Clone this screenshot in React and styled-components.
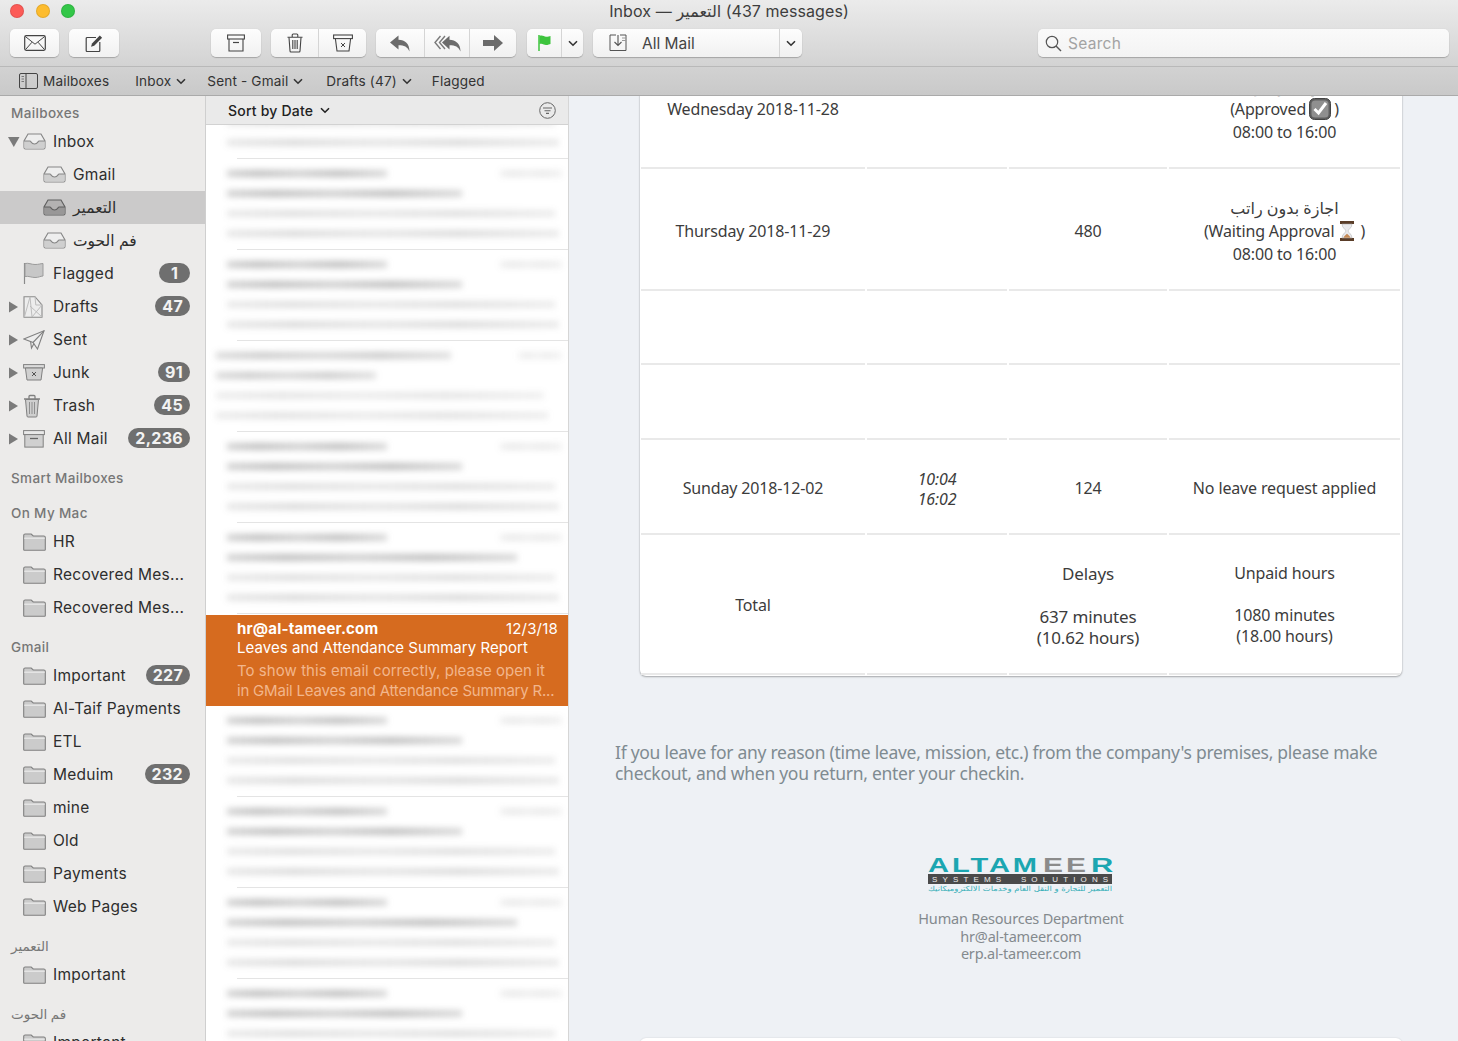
import React from "react"
import styled, { createGlobalStyle } from "styled-components"

const GlobalStyle = createGlobalStyle`
  html, body {
    margin: 0;
    height: 100%;
    overflow: hidden;
    font-family: Inter, "DejaVu Sans", sans-serif;
    -webkit-font-smoothing: antialiased;
  }
  #root { height: 100%; }
`

const Window = styled.div`
  width: 1458px;
  height: 1041px;
  display: flex;
  flex-direction: column;
  overflow: hidden;
  background: #ecebea;
`

const Chrome = styled.header`
  height: 66px;
  flex: none;
  background: linear-gradient(#ebebeb, #d3d3d3);
  border-bottom: 1px solid #b9b9b9;
`

const TitleBar = styled.div`
  height: 22px;
  display: grid;
  grid-template-columns: 1fr auto 1fr;
  align-items: center;
`

const Lights = styled.div`
  display: flex;
  gap: 11.5px;
  padding-left: 10px;
`

const Light = styled.span`
  width: 14px;
  height: 14px;
  border-radius: 50%;
  background: ${(p) => p.$color};
  box-shadow: inset 0 0 0 1px rgba(0, 0, 0, 0.1);
`

const Title = styled.div`
  font-size: 16px;
  color: #3d3d3d;
  letter-spacing: 0.1px;
`

const Toolbar = styled.div`
  display: flex;
  align-items: flex-start;
  gap: 10px;
  padding: 7px 9px 0 10px;
`

const Group = styled.div`
  display: flex;
  height: 28px;
  margin-left: ${(p) => p.$offset || 0}px;
  border-radius: 5px;
  background: linear-gradient(#fdfdfd, #f1f1f1);
  box-shadow: 0 1px 1px rgba(0, 0, 0, 0.22), 0 0 1px rgba(0, 0, 0, 0.12);
`

const Btn = styled.div`
  width: ${(p) => p.$w}px;
  box-sizing: border-box;
  display: flex;
  align-items: center;
  justify-content: center;
  & + & {
    border-left: 1px solid #d5d5d5;
  }
`

const MailBtn = styled(Btn)`
  justify-content: flex-start;
  padding-left: 16px;
  gap: 13px;
  font-size: 15.5px;
  color: #444;
`

const SearchBox = styled.div`
  margin-left: auto;
  width: 411px;
  height: 28px;
  display: flex;
  align-items: center;
  gap: 6px;
  padding-left: 7px;
  box-sizing: border-box;
  border-radius: 5px;
  background: linear-gradient(#fafafa, #f3f3f3);
  box-shadow: 0 1px 1px rgba(0, 0, 0, 0.22), 0 0 1px rgba(0, 0, 0, 0.12);
  font-size: 15.5px;
  letter-spacing: 0.3px;
  color: #a3a3a3;
`

const FavBar = styled.nav`
  height: 28px;
  flex: none;
  display: flex;
  align-items: center;
  padding-left: 19px;
  background: linear-gradient(#d2d2d2, #c9c9c9);
  border-bottom: 1px solid #aaa;
  font-size: 13.6px;
  letter-spacing: 0.15px;
  color: #333;
`

const Fav = styled.div`
  display: flex;
  align-items: center;
  gap: 5px;
  margin-right: ${(p) => p.$after}px;
`

const Body = styled.main`
  flex: 1;
  min-height: 0;
  display: flex;
`

const Sidebar = styled.aside`
  width: 205px;
  flex: none;
  overflow: hidden;
  background: #ecebea;
  border-right: 1px solid #cfcfcf;
`

const Label = styled.div`
  height: ${(p) => (p.$first ? 29.4 : 35)}px;
  box-sizing: border-box;
  display: flex;
  align-items: flex-end;
  padding: 0 0 4px 11px;
  font-size: 13.5px;
  font-weight: 500;
  letter-spacing: 0.35px;
  color: #777;
`

const Row = styled.div`
  height: 33px;
  display: flex;
  align-items: center;
  padding-right: 15px;
  font-size: 15.5px;
  letter-spacing: 0.25px;
  color: #2e2e2e;
  background: ${(p) => (p.$active ? "#cbcaca" : "transparent")};
`

const Arrow = styled.span`
  width: 23px;
  flex: none;
  display: flex;
  justify-content: flex-start;
  padding-left: 8px;
  box-sizing: border-box;
`

const IconSlot = styled.span`
  width: 30px;
  flex: none;
  display: flex;
  margin-left: ${(p) => (p.$child ? 20 : 0)}px;
`

const RowText = styled.span`
  flex: 1;
  white-space: nowrap;
`

const Badge = styled.span`
  height: 20px;
  min-width: 17px;
  padding: 0 7px;
  margin-bottom: 2px;
  display: flex;
  align-items: center;
  justify-content: center;
  border-radius: 10px;
  background: #6f6f6f;
  color: #f3f3f3;
  font-size: 16px;
  font-weight: 700;
  letter-spacing: 0.3px;
`

const ListPane = styled.section`
  width: 362px;
  flex: none;
  display: flex;
  flex-direction: column;
  background: #fff;
  border-right: 1px solid #d6d6d6;
`

const ListHeader = styled.div`
  height: 28px;
  flex: none;
  display: flex;
  align-items: center;
  gap: 7px;
  padding: 0 12px 0 22px;
  background: #eaeaea;
  border-bottom: 1px solid #d2d2d2;
  font-size: 14px;
  font-weight: 500;
  letter-spacing: 0.2px;
  color: #222;
`

const FilterSlot = styled.span`
  margin-left: auto;
  display: flex;
`

const ListScroll = styled.div`
  flex: 1;
  min-height: 0;
  overflow: hidden;
`

const ListInner = styled.div`
  margin-top: -57px;
`

const Blurred = styled.div`
  height: 91px;
  box-sizing: border-box;
  position: relative;
  overflow: hidden;
  &::after {
    content: "";
    position: absolute;
    left: 31px;
    right: 0;
    bottom: 0;
    height: 1px;
    background: #e4e4e4;
  }
`

const BlurStack = styled.div`
  display: flex;
  flex-direction: column;
  padding: 11px 6px 0 ${(p) => (p.$shift ? 10 : 21)}px;
  gap: 13px;
  filter: blur(3px);
`

const BlurLine = styled.div`
  display: flex;
  justify-content: space-between;
  height: 7px;
`

const Smear = styled.i`
  display: block;
  height: 100%;
  width: ${(p) => p.$w}px;
  background: linear-gradient(
    90deg,
    rgba(70, 70, 70, ${(p) => p.$a * 0.7}) 0,
    rgba(70, 70, 70, ${(p) => p.$a}) 20%,
    rgba(70, 70, 70, ${(p) => p.$a * 0.75}) 45%,
    rgba(70, 70, 70, ${(p) => p.$a}) 70%,
    rgba(70, 70, 70, ${(p) => p.$a * 0.6}) 100%
  );
`

const Selected = styled.div`
  height: 91px;
  margin-top: 1px;
  box-sizing: border-box;
  padding: 4px 10px 0 31px;
  background: #d66b1f;
  color: #fff;
  font-size: 15px;
`

const SelectedTop = styled.div`
  display: flex;
  justify-content: space-between;
  line-height: 19px;
  letter-spacing: 0.2px;
`

const Sender = styled.span`
  font-weight: 700;
`

const Subject = styled.div`
  line-height: 19px;
  margin-bottom: 4px;
  letter-spacing: 0.05px;
`

const Preview = styled.div`
  line-height: 20px;
  color: #f2b68c;
  white-space: nowrap;
  letter-spacing: ${(p) => p.$spacing}px;
`

const MailPane = styled.article`
  flex: 1;
  min-width: 0;
  overflow: hidden;
  display: flex;
  flex-direction: column;
  background: #eef1f5;
  font-family: "Noto Sans", "DejaVu Sans", sans-serif;
`

const TableCard = styled.div`
  flex: none;
  width: 762px;
  box-sizing: border-box;
  margin: -49px 0 0 71px;
  padding: 0 2px 1px 1px;
  background: #fff;
  border-radius: 6px;
  box-shadow: 0 1px 2px rgba(0, 0, 0, 0.28), 0 0 2px rgba(0, 0, 0, 0.14);
  color: #3c3c3c;
  font-size: 16px;
  letter-spacing: -0.15px;
`

const TableRow = styled.div`
  display: grid;
  grid-template-columns: 224px 140px 158px 231px;
  column-gap: 2px;
  height: ${(p) => p.$h}px;
`

const Cell = styled.div`
  display: flex;
  flex-direction: column;
  align-items: center;
  justify-content: center;
  text-align: center;
  padding-top: ${(p) => (p.$total ? 2 : 4)}px;
  box-sizing: border-box;
  border-bottom: 2px solid #e9e9e9;
  line-height: ${(p) => (p.$italic ? 20 : 23)}px;
  font-style: ${(p) => (p.$italic ? "italic" : "normal")};
`

const Inline = styled.span`
  display: inline-flex;
  align-items: center;
  gap: ${(p) => p.$gap}px;
`

const TotalLines = styled.div`
  line-height: 21px;
  font-size: ${(p) => p.$size}px;
`

const Spaced = styled.div`
  margin-bottom: ${(p) => p.$gap}px;
`

const Notice = styled.p`
  margin: 66px 0 0 46px;
  width: 790px;
  font-size: 17.5px;
  letter-spacing: -0.28px;
  line-height: 21px;
  color: #7f8b91;
`

const Signature = styled.div`
  margin-top: 70px;
  width: 904px;
  display: flex;
  flex-direction: column;
  align-items: center;
  font-size: 14.5px;
  letter-spacing: -0.2px;
  line-height: 17.5px;
  color: #848a8e;
`

const LogoWrap = styled.div`
  display: flex;
  margin-bottom: 17px;
`

const NextCard = styled.div`
  flex: none;
  width: 762px;
  height: 60px;
  margin: 75px 0 0 71px;
  background: #fff;
  border-radius: 6px 6px 0 0;
  box-shadow: 0 0 2px rgba(0, 0, 0, 0.14);
`

/* icons */
const Svg = ({ w, h, children, ...rest }) => (
  <svg width={w} height={h} viewBox={`0 0 ${w} ${h}`} fill="none" {...rest}>
    {children}
  </svg>
)

const Chevron = ({ color = "#333" }) => (
  <Svg w={10} h={7}>
    <path d="M1 1.2 5 5.2 9 1.2" stroke={color} strokeWidth="1.6" />
  </Svg>
)

const Triangle = ({ open }) => (
  <Svg w={12} h={12}>
    {open ? <path d="M0 1h11.5L5.8 11z" fill="#7b7b7b" /> : <path d="M1 .5 10 6l-9 5.5z" fill="#7b7b7b" />}
  </Svg>
)

const Envelope = () => (
  <Svg w={22} h={16}>
    <rect x=".7" y=".7" width="20.6" height="14.6" rx="1.5" stroke="#444" strokeWidth="1.2" />
    <path d="M1.2 1.4 11 9.2l9.8-7.8M1.5 14.6 8 7.2M20.5 14.6 14 7.2" stroke="#444" />
  </Svg>
)

const Compose = () => (
  <Svg w={18} h={18}>
    <path d="M11 3.5H2.2a1 1 0 0 0-1 1v12a1 1 0 0 0 1 1h11.6a1 1 0 0 0 1-1V8" stroke="#444" strokeWidth="1.2" />
    <path d="M6 12.8 7 9.6 14.8 1.6l2.3 2.2-7.9 8z" fill="#444" />
  </Svg>
)

const ArchiveBox = () => (
  <Svg w={18} h={18}>
    <rect x=".6" y="1" width="16.8" height="4" stroke="#444" strokeWidth="1.1" />
    <path d="M2 5v12h14V5" stroke="#444" strokeWidth="1.1" />
    <path d="M6 8.5h6" stroke="#444" strokeWidth="1.2" />
  </Svg>
)

const TrashCan = () => (
  <Svg w={16} h={20}>
    <path d="M.5 4.2h15M5.2 4V2a1 1 0 0 1 1-1h3.6a1 1 0 0 1 1 1v2" stroke="#444" strokeWidth="1.1" />
    <path d="M2 4.5 3 18a1 1 0 0 0 1 1h8a1 1 0 0 0 1-1l1-13.5" stroke="#444" strokeWidth="1.1" />
    <path d="M5.8 7v9M8 7v9M10.2 7v9" stroke="#444" strokeWidth="1.1" />
  </Svg>
)

const JunkBin = () => (
  <Svg w={20} h={18}>
    <rect x=".6" y="1" width="18.8" height="3.6" stroke="#444" strokeWidth="1.1" />
    <path d="M2.4 4.8 4 17h12l1.6-12.2" stroke="#444" strokeWidth="1.1" />
    <path d="M8 9l4 4M12 9l-4 4" stroke="#444" />
  </Svg>
)

const Reply = () => (
  <Svg w={20} h={17}>
    <path d="M0 7.5 8.5.5v4.3c6.5.2 11 3.7 11 11.7-2-4.8-5.3-6.3-11-6.3v4.4z" fill="#6b6b6b" />
  </Svg>
)

const ReplyAll = () => (
  <Svg w={27} h={17}>
    <path d="M6.5 1 1 7.5 6.5 14M11 1 5.5 7.5 11 14" stroke="#7a7a7a" strokeWidth="1.4" />
    <path d="M8 7.5 15.5.7v4.1c6 .2 11 3.7 11 11.7-2-4.8-5.3-6.3-11-6.3v4.4z" fill="#6b6b6b" />
  </Svg>
)

const Forward = () => (
  <Svg w={20} h={16}>
    <path d="M0 5h11V0l9 8-9 8v-5H0z" fill="#6b6b6b" />
  </Svg>
)

const GreenFlag = () => (
  <Svg w={13} h={16}>
    <path d="M1 0v16" stroke="#3dc43d" strokeWidth="1.5" />
    <path d="M1.5 1c3-1.2 4.5.8 6.5.8 2 0 3.5-.6 4.5-.8v8c-1 .3-2.5 1-4.5 1S4.5 8 1.5 9z" fill="#3dc43d" />
  </Svg>
)

const MoveIcon = () => (
  <Svg w={20} h={18}>
    <path d="M7 1H1v15.5h16V1h-6" stroke="#555" />
    <path d="M9 1v10M5.5 8 9 11.5 12.5 8" stroke="#555" strokeWidth="1.1" />
    <path d="M13 4h4M13 6.5h4" stroke="#999" />
  </Svg>
)

const Magnifier = () => (
  <Svg w={17} h={17}>
    <circle cx="7" cy="7" r="5.7" stroke="#555" strokeWidth="1.2" />
    <path d="M11 11l5 5" stroke="#555" strokeWidth="1.4" />
  </Svg>
)

const SidebarToggle = () => (
  <Svg w={19} h={16}>
    <rect x=".5" y=".5" width="18" height="15" rx="1.5" stroke="#444" />
    <path d="M7 .5v15" stroke="#444" />
    <path d="M2.5 3.5h2.5M2.5 6h2.5M2.5 8.5h2.5" stroke="#777" />
  </Svg>
)

const FilterIcon = () => (
  <Svg w={17} h={17}>
    <circle cx="8.5" cy="8.5" r="7.8" stroke="#666" />
    <path d="M4 6h9M5.5 8.7h6M7 11.4h3" stroke="#666" strokeWidth="1.1" />
  </Svg>
)

const TrayIcon = ({ dark }) => (
  <Svg w={23} h={17}>
    <path
      d="M5 1h13l4 7v6.5a1.5 1.5 0 0 1-1.5 1.5h-18A1.5 1.5 0 0 1 1 14.5V8z"
      fill={dark ? "#b3b2b2" : "#eeeeee"}
      stroke={dark ? "#5e5e5e" : "#858585"}
      strokeWidth="1.1"
    />
    <path
      d="M1.3 8H7c1 0 1.2 3 4.5 3S15 8 16 8h5.7v6.5a1 1 0 0 1-1 1H2.3a1 1 0 0 1-1-1z"
      fill={dark ? "#989797" : "#cfcfcf"}
    />
    <path d="M1 8h6c1 0 1.2 3 4.5 3S15 8 16 8h6" stroke={dark ? "#5e5e5e" : "#858585"} strokeWidth="1.1" />
  </Svg>
)

const FlagIcon = () => (
  <Svg w={22} h={23}>
    <path d="M1.5 1v21" stroke="#8a8a8a" strokeWidth="1.2" />
    <path d="M2 1.5c4-.8 6 1 10 1s5-.8 8-1V14c-3 .2-4 1.5-8 1.5s-6-1.7-10-1z" fill="#c7c7c7" stroke="#9b9b9b" />
  </Svg>
)

const DraftIcon = () => (
  <Svg w={20} h={22}>
    <path d="M1 .7h11l7 8.3v12.3H1z" fill="#ededed" stroke="#8a8a8a" strokeWidth="1.1" />
    <path d="M7 .9 9 21M7 .9 1.4 21M9 21 19 9M12 .9 12.8 9H19M7 10l12 11" stroke="#bdbdbd" />
  </Svg>
)

const SentIcon = () => (
  <Svg w={22} h={20}>
    <path d="M.8 9 21 .8 14.5 19 10 12.5z" fill="#ededed" stroke="#808080" strokeWidth="1.1" />
    <path d="M10 12.5 21 .8M7.5 11l1 7 2.5-4.5" stroke="#808080" strokeWidth="1.1" />
  </Svg>
)

const JunkIcon = () => (
  <Svg w={22} h={17}>
    <rect x=".6" y=".6" width="20.8" height="3.4" fill="#dcdcdc" stroke="#808080" />
    <path d="M2.4 4 4 16h14l1.6-12z" fill="#d0d0d0" stroke="#808080" />
    <path d="M9 8l4 4M13 8l-4 4" stroke="#555" />
  </Svg>
)

const TrashIcon = () => (
  <Svg w={18} h={24}>
    <path d="M1 5h16M6 4.5V2.5a1 1 0 0 1 1-1h4a1 1 0 0 1 1 1v2" stroke="#808080" strokeWidth="1.3" />
    <path d="M2.5 5.5 4 22a1 1 0 0 0 1 1h8a1 1 0 0 0 1-1l1.5-16.5z" fill="#cfcfcf" stroke="#808080" />
    <path d="M6.5 8v12M9 8v12M11.5 8v12" stroke="#8f8f8f" />
  </Svg>
)

const AllMailIcon = () => (
  <Svg w={22} h={18}>
    <rect x=".6" y=".6" width="20.8" height="4" fill="#e8e8e8" stroke="#808080" />
    <rect x="1.8" y="4.6" width="18.4" height="12.5" fill="#d0d0d0" stroke="#808080" />
    <path d="M7 8.5h8" stroke="#666" strokeWidth="1.3" />
  </Svg>
)

const FolderIcon = () => (
  <Svg w={23} h={18}>
    <path
      d="M.7 2.5A1.5 1.5 0 0 1 2.2 1h6l2 2h10.6a1.5 1.5 0 0 1 1.5 1.5v12a.8.8 0 0 1-.8.8H1.5a.8.8 0 0 1-.8-.8z"
      fill="#cbcbcb"
      stroke="#808080"
      strokeWidth="1.1"
    />
    <path d="M1.2 5.2h20.6" stroke="#f0f0f0" />
  </Svg>
)

const CheckBadge = () => (
  <Svg w={22} h={22}>
    <rect x=".5" y=".5" width="21" height="21" rx="5" fill="#5f5f5f" stroke="#444" />
    <rect x="2.5" y="2.5" width="17" height="17" rx="3.5" fill="#8f8f8f" />
    <path d="M5.5 11 9.5 15 17 5" stroke="#fff" strokeWidth="3" />
  </Svg>
)

const Hourglass = () => (
  <Svg w={16} h={20}>
    <rect x="1" y="0" width="14" height="3" fill="#5a3d28" />
    <rect x="1" y="17" width="14" height="3" fill="#5a3d28" />
    <path d="M3 3h10c0 4-3.5 5-4 7 .5 2 4 3 4 7H3c0-4 3.5-5 4-7-.5-2-4-3-4-7z" fill="#e9e9ec" stroke="#aaa" strokeWidth=".5" />
    <path d="M4.5 16.8c.5-2 2.5-3 3.5-4 1 1 3 2 3.5 4z" fill="#c58a56" />
  </Svg>
)

const Logo = () => (
  <Svg w={186} h={39}>
    <text x="0" y="18" fill="#1ca6b1" fontFamily="Liberation Sans" fontWeight="700" fontSize="20" letterSpacing="2" textLength="112" lengthAdjust="spacingAndGlyphs">
      ALTAM
    </text>
    <text x="115" y="18" fill="#8b8b8b" fontFamily="Liberation Sans" fontWeight="700" fontSize="20" letterSpacing="2" textLength="46" lengthAdjust="spacingAndGlyphs">
      EE
    </text>
    <text x="163" y="18" fill="#1ca6b1" fontFamily="Liberation Sans" fontWeight="700" fontSize="20" textLength="22" lengthAdjust="spacingAndGlyphs">
      R
    </text>
    <rect x="0" y="20" width="184" height="10" fill="#4a4a4a" />
    <text x="4" y="28" fill="#eee" fontFamily="Liberation Sans" fontSize="8" textLength="176" xmlSpace="preserve">
      SYSTEMS  SOLUTIONS
    </text>
    <text x="0" y="37" fill="#35afb8" fontFamily="DejaVu Sans" fontSize="7" textLength="184" lengthAdjust="spacingAndGlyphs" direction="rtl" textAnchor="end">
      التعمير للتجارة و النقل العام وخدمات الالكتروميكانيك
    </text>
  </Svg>
)

const mailboxes = [
  { arrow: "open", icon: <TrayIcon />, text: "Inbox" },
  { child: true, icon: <TrayIcon />, text: "Gmail" },
  { child: true, icon: <TrayIcon dark />, text: "التعمير", active: true },
  { child: true, icon: <TrayIcon />, text: "فم الحوت" },
  { icon: <FlagIcon />, text: "Flagged", badge: "1" },
  { arrow: "closed", icon: <DraftIcon />, text: "Drafts", badge: "47" },
  { arrow: "closed", icon: <SentIcon />, text: "Sent" },
  { arrow: "closed", icon: <JunkIcon />, text: "Junk", badge: "91" },
  { arrow: "closed", icon: <TrashIcon />, text: "Trash", badge: "45" },
  { arrow: "closed", icon: <AllMailIcon />, text: "All Mail", badge: "2,236" },
]

const folders = (names) => names.map((n) => (typeof n === "string" ? { icon: <FolderIcon />, text: n } : { icon: <FolderIcon />, ...n }))

const MailRow = ({ item }) => (
  <Row $active={item.active}>
    <Arrow>{item.arrow && <Triangle open={item.arrow === "open"} />}</Arrow>
    <IconSlot $child={item.child}>{item.icon}</IconSlot>
    <RowText>{item.text}</RowText>
    {item.badge && <Badge>{item.badge}</Badge>}
  </Row>
)

const blurRows = [
  { name: 0, subject: 0, date: 0, a: 0.34 },
  { name: 160, subject: 235, date: 62, a: 0.34 },
  { name: 160, subject: 235, date: 62, a: 0.34 },
  { name: 235, subject: 160, date: 44, a: 0.28, shift: true },
  { name: 160, subject: 235, date: 62, a: 0.34 },
  { name: 160, subject: 290, date: 62, a: 0.34 },
]

const blurRowsAfter = [
  { name: 160, subject: 235, date: 62, a: 0.34 },
  { name: 160, subject: 235, date: 62, a: 0.34 },
  { name: 160, subject: 290, date: 62, a: 0.34 },
  { name: 160, subject: 235, date: 62, a: 0.34 },
]

const BlurRow = ({ row }) => (
  <Blurred>
    <BlurStack $shift={row.shift}>
      <BlurLine>
        <Smear $w={row.name} $a={row.a} />
        <Smear $w={row.date} $a={row.a * 0.35} />
      </BlurLine>
      <BlurLine>
        <Smear $w={row.subject} $a={row.a} />
      </BlurLine>
      <BlurLine>
        <Smear $w={328} $a={row.a * 0.5} />
      </BlurLine>
      <BlurLine>
        <Smear $w={332} $a={row.a * 0.55} />
      </BlurLine>
    </BlurStack>
  </Blurred>
)

const App = () => (
  <>
    <GlobalStyle />
    <Window>
      <Chrome>
        <TitleBar>
          <Lights>
            <Light $color="#fc5b57" />
            <Light $color="#fdbc2e" />
            <Light $color="#33c748" />
          </Lights>
          <Title>Inbox — التعمير (437 messages)</Title>
          <span />
        </TitleBar>
        <Toolbar>
          <Group><Btn $w={49}><Envelope /></Btn></Group>
          <Group><Btn $w={50}><Compose /></Btn></Group>
          <Group $offset={82}><Btn $w={50}><ArchiveBox /></Btn></Group>
          <Group>
            <Btn $w={47}><TrashCan /></Btn>
            <Btn $w={48}><JunkBin /></Btn>
          </Group>
          <Group>
            <Btn $w={48}><Reply /></Btn>
            <Btn $w={45}><ReplyAll /></Btn>
            <Btn $w={47}><Forward /></Btn>
          </Group>
          <Group $offset={1}>
            <Btn $w={34}><GreenFlag /></Btn>
            <Btn $w={22}><Chevron /></Btn>
          </Group>
          <Group>
            <MailBtn $w={186}><MoveIcon /><span>All Mail</span></MailBtn>
            <Btn $w={23}><Chevron /></Btn>
          </Group>
          <SearchBox><Magnifier />Search</SearchBox>
        </Toolbar>
      </Chrome>
      <FavBar>
        <Fav $after={26}><SidebarToggle />Mailboxes</Fav>
        <Fav $after={21}>Inbox <Chevron /></Fav>
        <Fav $after={23}>Sent - Gmail <Chevron /></Fav>
        <Fav $after={20}>Drafts (47) <Chevron /></Fav>
        <Fav $after={0}>Flagged</Fav>
      </FavBar>
      <Body>
        <Sidebar>
          <Label $first>Mailboxes</Label>
          {mailboxes.map((m) => <MailRow key={m.text} item={m} />)}
          <Label>Smart Mailboxes</Label>
          <Label>On My Mac</Label>
          {folders(["HR", "Recovered Mes...", "Recovered Mes..."]).map((m, i) => <MailRow key={i} item={m} />)}
          <Label>Gmail</Label>
          {folders([
            { text: "Important", badge: "227" },
            "Al-Taif Payments",
            "ETL",
            { text: "Meduim", badge: "232" },
            "mine",
            "Old",
            "Payments",
            "Web Pages",
          ]).map((m, i) => <MailRow key={i} item={m} />)}
          <Label>التعمير</Label>
          {folders(["Important"]).map((m, i) => <MailRow key={i} item={m} />)}
          <Label>فم الحوت</Label>
          {folders(["Important"]).map((m, i) => <MailRow key={i} item={m} />)}
        </Sidebar>
        <ListPane>
          <ListHeader>
            Sort by Date <Chevron color="#222" />
            <FilterSlot><FilterIcon /></FilterSlot>
          </ListHeader>
          <ListScroll>
            <ListInner>
              {blurRows.map((r, i) => <BlurRow key={i} row={r} />)}
              <Selected>
                <SelectedTop>
                  <Sender>hr@al-tameer.com</Sender>
                  <span>12/3/18</span>
                </SelectedTop>
                <Subject>Leaves and Attendance Summary Report</Subject>
                <Preview $spacing={0.05}>To show this email correctly, please open it</Preview>
                <Preview $spacing={-0.2}>in GMail Leaves and Attendance Summary R...</Preview>
              </Selected>
              {blurRowsAfter.map((r, i) => <BlurRow key={i} row={r} />)}
            </ListInner>
          </ListScroll>
        </ListPane>
        <MailPane>
          <TableCard>
            <TableRow $h={122}>
              <Cell>Wednesday 2018-11-28</Cell>
              <Cell />
              <Cell />
              <Cell>
                <div>اجازة بدون راتب</div>
                <Inline $gap={3}>(Approved <CheckBadge />)</Inline>
                <div>08:00 to 16:00</div>
              </Cell>
            </TableRow>
            <TableRow $h={122}>
              <Cell>Thursday 2018-11-29</Cell>
              <Cell />
              <Cell>480</Cell>
              <Cell>
                <div>اجازة بدون راتب</div>
                <Inline $gap={5}>(Waiting Approval <Hourglass />)</Inline>
                <div>08:00 to 16:00</div>
              </Cell>
            </TableRow>
            <TableRow $h={74}><Cell /><Cell /><Cell /><Cell /></TableRow>
            <TableRow $h={75}><Cell /><Cell /><Cell /><Cell /></TableRow>
            <TableRow $h={95}>
              <Cell>Sunday 2018-12-02</Cell>
              <Cell $italic><div>10:04</div><div>16:02</div></Cell>
              <Cell>124</Cell>
              <Cell>No leave request applied</Cell>
            </TableRow>
            <TableRow $h={140}>
              <Cell $total>Total</Cell>
              <Cell $total />
              <Cell $total>
                <TotalLines $size={17}>
                  <Spaced $gap={22}>Delays</Spaced>
                  <div>637 minutes</div>
                  <div>(10.62 hours)</div>
                </TotalLines>
              </Cell>
              <Cell $total>
                <TotalLines $size={16}>
                  <Spaced $gap={21}>Unpaid hours</Spaced>
                  <div>1080 minutes</div>
                  <div>(18.00 hours)</div>
                </TotalLines>
              </Cell>
            </TableRow>
          </TableCard>
          <Notice>
            If you leave for any reason (time leave, mission, etc.) from the company's premises, please make checkout, and when you return, enter your checkin.
          </Notice>
          <Signature>
            <LogoWrap><Logo /></LogoWrap>
            <div>Human Resources Department</div>
            <div>hr@al-tameer.com</div>
            <div>erp.al-tameer.com</div>
          </Signature>
          <NextCard />
        </MailPane>
      </Body>
    </Window>
  </>
)

export default App
